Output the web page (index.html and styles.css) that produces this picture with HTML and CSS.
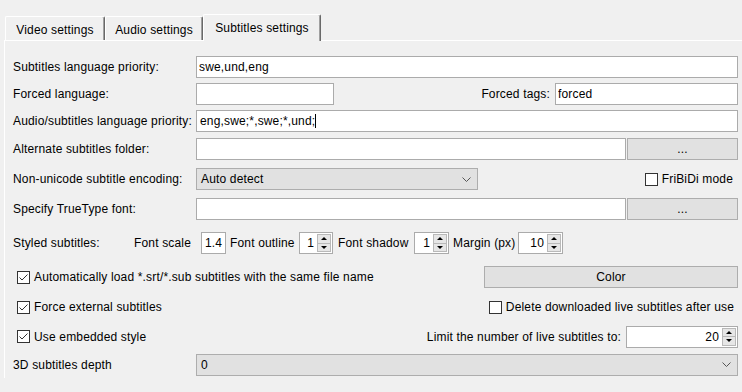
FILE: index.html
```html
<!DOCTYPE html>
<html>
<head>
    <link rel="stylesheet" href="styles.css">
</head>
<body>
    <div class="tabs">
        <div class="tab tab-video">Video settings</div>
        <div class="tab tab-audio">Audio settings</div>
        <div class="tab tab-subs active">Subtitles settings</div>
    </div>
    <div class="panel">
        <div class="row">
            <span class="label">Subtitles language priority:</span>
            <input class="field grow" value="swe,und,eng">
        </div>
        <div class="row">
            <span class="label">Forced language:</span>
            <input class="field forced-lang" value="">
            <span class="spacer"></span>
            <span class="label-right">Forced tags:</span>
            <input class="field forced-tags" value="forced">
        </div>
        <div class="row">
            <span class="label">Audio/subtitles language priority:</span>
            <div class="field grow">eng,swe;*,swe;*,und;<span class="caret"></span></div>
        </div>
        <div class="row">
            <span class="label">Alternate subtitles folder:</span>
            <input class="field grow" value="">
            <button class="btn browse">...</button>
        </div>
        <div class="row">
            <span class="label">Non-unicode subtitle encoding:</span>
            <div class="combo encoding">
                <span class="combo-text">Auto detect</span>
                <svg class="chevron" width="9" height="5" viewBox="0 0 9 5"><polyline points="0.5,0.5 4.5,4.5 8.5,0.5" fill="none" stroke="#555" stroke-width="1"/></svg>
            </div>
            <span class="spacer"></span>
            <label class="check fribidi"><span class="box"></span>FriBiDi mode</label>
        </div>
        <div class="row">
            <span class="label">Specify TrueType font:</span>
            <input class="field grow" value="">
            <button class="btn browse">...</button>
        </div>
        <div class="row">
            <span class="label styled">Styled subtitles:</span>
            <span class="sub-label w-scale">Font scale</span>
            <div class="field scale">1.4</div>
            <span class="sub-label w-outline">Font outline</span>
            <div class="spin s-outline">
                <span class="spin-val">1</span>
                <div class="arrows"><div class="arrow up"></div><div class="arrow down"></div></div>
            </div>
            <span class="sub-label w-shadow">Font shadow</span>
            <div class="spin s-shadow">
                <span class="spin-val">1</span>
                <div class="arrows"><div class="arrow up"></div><div class="arrow down"></div></div>
            </div>
            <span class="sub-label w-margin">Margin (px)</span>
            <div class="spin s-margin">
                <span class="spin-val">10</span>
                <div class="arrows"><div class="arrow up"></div><div class="arrow down"></div></div>
            </div>
        </div>
        <div class="row">
            <label class="check indent"><span class="box checked"><svg width="11" height="11" viewBox="0 0 11 11"><polyline points="1.5,5.5 4,8 9.5,2.5" fill="none" stroke="#333" stroke-width="1"/></svg></span>Automatically load *.srt/*.sub subtitles with the same file name</label>
            <span class="spacer"></span>
            <button class="btn color">Color</button>
        </div>
        <div class="row">
            <label class="check indent"><span class="box checked"><svg width="11" height="11" viewBox="0 0 11 11"><polyline points="1.5,5.5 4,8 9.5,2.5" fill="none" stroke="#333" stroke-width="1"/></svg></span>Force external subtitles</label>
            <span class="spacer"></span>
            <label class="check delete"><span class="box"></span>Delete downloaded live subtitles after use</label>
        </div>
        <div class="row">
            <label class="check indent"><span class="box checked"><svg width="11" height="11" viewBox="0 0 11 11"><polyline points="1.5,5.5 4,8 9.5,2.5" fill="none" stroke="#333" stroke-width="1"/></svg></span>Use embedded style</label>
            <span class="spacer"></span>
            <span class="label-right limit">Limit the number of live subtitles to:</span>
            <div class="spin s-limit">
                <span class="spin-val">20</span>
                <div class="arrows"><div class="arrow up"></div><div class="arrow down"></div></div>
            </div>
        </div>
        <div class="row">
            <span class="label">3D subtitles depth</span>
            <div class="combo grow">
                <span class="combo-text">0</span>
                <svg class="chevron" width="9" height="5" viewBox="0 0 9 5"><polyline points="0.5,0.5 4.5,4.5 8.5,0.5" fill="none" stroke="#555" stroke-width="1"/></svg>
            </div>
        </div>
    </div>
</body>
</html>
```

FILE: styles.css
```css
body {
    margin: 0;
    background-color: #f0f0f0;
    font-family: 'Liberation Sans', Arial, sans-serif;
    font-size: 12px;
    letter-spacing: 0.16px;
    color: #000;
    width: 742px;
    height: 392px;
    overflow: hidden;
}
.tabs {
    display: flex;
    align-items: flex-end;
    height: 40px;
    padding-left: 5px;
}
.tab {
    box-sizing: border-box;
    height: 24px;
    padding-top: 6px;
    line-height: 14px;
    text-align: center;
    border-top: 1px solid #fff;
    border-left: 1px solid #fff;
    border-right: 1px solid #696969;
    box-shadow: inset -1px 0 0 #a0a0a0;
    border-radius: 2px 2px 0 0;
    background-color: #f0f0f0;
}
.tab-video {
    width: 100px;
}
.tab-audio {
    width: 98px;
}
.tab-subs {
    width: 118px;
}
.tab.active {
    position: relative;
    z-index: 1;
    height: 27px;
    margin-bottom: -1px;
}
.panel {
    margin-left: 4px;
    border-top: 1px solid #fff;
    border-left: 1px solid #fff;
    padding: 12px 4px 0 8px;
    display: grid;
    grid-template-rows: 27px 27px 27px 30px 30px 30px 38px 30px 30px 29px 27px;
}
.row {
    display: flex;
    align-items: center;
}
.label {
    width: 183px;
    flex-shrink: 0;
}
.label.styled {
    width: 121px;
}
.spacer {
    flex: 1;
}
.grow {
    flex: 1;
}
.field {
    box-sizing: border-box;
    height: 22px;
    border: 1px solid #ababab;
    background-color: #fff;
    font-family: inherit;
    font-size: 12px;
    letter-spacing: 0.16px;
    color: #000;
    padding: 0 0 0 2px;
    margin: 0;
    line-height: 20px;
    outline: none;
}
div.field {
    padding-left: 3px;
}
.caret {
    display: inline-block;
    width: 1px;
    height: 14px;
    background-color: #000;
    vertical-align: -3px;
}
.forced-lang {
    width: 138px;
}
.label-right {
    margin-right: 5px;
}
.forced-tags {
    width: 183px;
}
.btn {
    box-sizing: border-box;
    height: 22px;
    border: 1px solid #adadad;
    background-color: #e1e1e1;
    font-family: inherit;
    font-size: 12px;
    letter-spacing: 0.16px;
    color: #000;
    padding: 0;
    margin: 0;
}
.browse {
    width: 111px;
    margin-left: 1px;
}
.color {
    width: 254px;
}
.combo {
    box-sizing: border-box;
    height: 22px;
    border: 1px solid #adadad;
    background-color: #e1e1e1;
    display: flex;
    align-items: center;
    padding: 0 6px 0 4px;
}
.combo-text {
    flex: 1;
}
.encoding {
    width: 282px;
}
.chevron {
    display: block;
}
.check {
    display: flex;
    align-items: center;
    white-space: nowrap;
}
.box {
    box-sizing: border-box;
    width: 13px;
    height: 13px;
    border: 1px solid #333;
    background-color: #fff;
    margin-right: 4px;
    display: flex;
    align-items: center;
    justify-content: center;
}
.box svg {
    display: block;
}
.indent {
    margin-left: 4px;
}
.fribidi {
    margin-right: 5px;
}
.delete {
    margin-right: 4px;
}
.sub-label {
    flex-shrink: 0;
}
.w-scale {
    width: 67px;
}
div.scale {
    width: 25px;
    text-align: center;
    padding: 0;
}
.w-outline {
    width: 69px;
    margin-left: 4px;
}
.w-shadow {
    width: 76px;
    margin-left: 5px;
}
.w-margin {
    width: 65px;
    margin-left: 4px;
}
.spin {
    box-sizing: border-box;
    height: 22px;
    border: 1px solid #ababab;
    background-color: #fff;
    display: flex;
    align-items: stretch;
}
.spin-val {
    flex: 1;
    text-align: right;
    line-height: 20px;
    padding-right: 3px;
}
.arrows {
    width: 14px;
    display: flex;
    flex-direction: column;
    margin: 1px 1px 1px 0;
}
.arrow {
    flex: 1;
    box-sizing: border-box;
    border: 1px solid #b9b9b9;
    background-color: #e6e6e6;
    display: flex;
    align-items: center;
    justify-content: center;
}
.arrow.down {
    border-top: none;
}
.arrow::after {
    content: "";
    width: 0;
    height: 0;
    border-left: 3px solid transparent;
    border-right: 3px solid transparent;
}
.arrow.up::after {
    border-bottom: 3px solid #000;
}
.arrow.down::after {
    border-top: 3px solid #000;
}
.s-outline {
    width: 34px;
}
.s-shadow {
    width: 35px;
}
.s-margin {
    width: 45px;
}
.s-limit {
    width: 112px;
}
```
